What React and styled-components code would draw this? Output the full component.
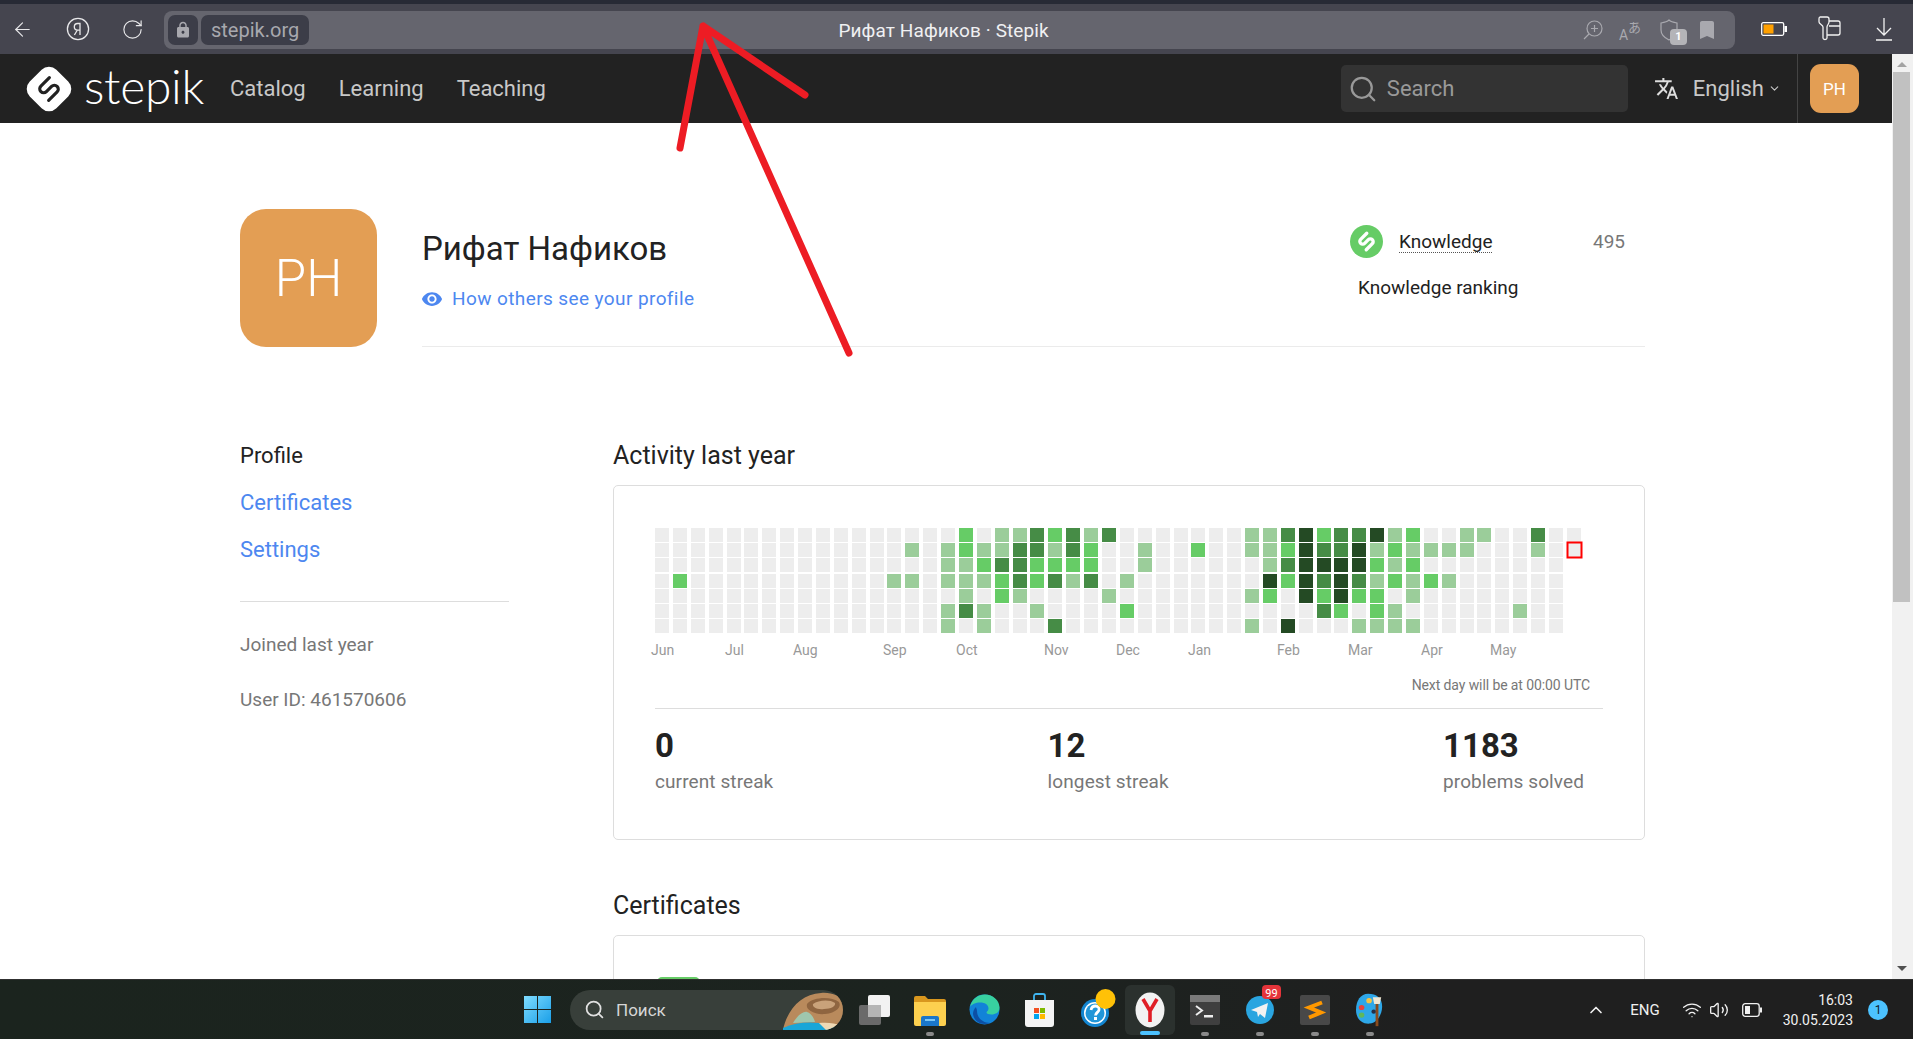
import React from "react"
import styled, { createGlobalStyle } from "styled-components"
import { ArrowLeft, RotateCw, Search, ChevronDown, ChevronUp, Wifi, Volume2 } from "lucide-react"
import { MdTranslate, MdVisibility, MdLock, MdBookmark } from "react-icons/md"

const GlobalStyle = createGlobalStyle`
  html, body {
    margin: 0;
    padding: 0;
    overflow: hidden;
    background: #fff;
    font-family: Roboto, "Liberation Sans", sans-serif;
  }
  * { box-sizing: border-box; }
`

const Screen = styled.div`
  position: relative;
  width: 1913px;
  height: 1039px;
  display: flex;
  flex-direction: column;
  overflow: hidden;
`

/* browser chrome */
const TabStrip = styled.div`
  height: 4px;
  background: #272a35;
  flex: none;
`
const Toolbar = styled.div`
  height: 50px;
  flex: none;
  background: #45454f;
  display: flex;
  align-items: center;
  padding: 0 2px 0 0;
`
const ChromeBtn = styled.div`
  width: 55px;
  height: 50px;
  flex: none;
  display: flex;
  align-items: center;
  justify-content: center;
  color: #e8e8ea;
  &:first-child { margin-left: -5px; }
`
const AddressBar = styled.div`
  flex: 1;
  height: 38px;
  margin: 2px 11px 0 4px;
  background: #65656e;
  border-radius: 8px;
  display: flex;
  align-items: center;
  padding: 0 9px 0 4px;
`
const Chip = styled.div`
  height: 30px;
  background: #3c3d48;
  border-radius: 7px;
  display: flex;
  align-items: center;
  justify-content: center;
  color: #a8a8ae;
  font-size: 20px;
  padding: 0 ${p => p.$pad}px;
  margin-right: 3px;
  flex: none;
`
const PageTitle = styled.div`
  flex: 1;
  text-align: center;
  color: #f0f0f2;
  font-size: 19px;
  letter-spacing: 0.1px;
  padding-left: 1px;
`
const BarIcon = styled.div`
  position: relative;
  width: 38px;
  height: 30px;
  flex: none;
  display: flex;
  align-items: center;
  justify-content: center;
  color: #a9a9af;
`
const ShieldCount = styled.span`
  position: absolute;
  left: 20px;
  top: 14px;
  width: 17px;
  height: 16px;
  border-radius: 4px;
  background: #b4b4b8;
  color: #fff;
  font-size: 11px;
  font-weight: 700;
  text-align: center;
  line-height: 16px;
`

/* page */
const Body = styled.div`
  flex: 1;
  min-height: 0;
  display: flex;
`
const Page = styled.div`
  flex: 1;
  min-width: 0;
  display: flex;
  flex-direction: column;
  overflow: hidden;
  background: #fff;
`
const Scrollbar = styled.div`
  width: 21px;
  flex: none;
  background: #f1f1f1;
  display: flex;
  flex-direction: column;
  align-items: center;
  justify-content: space-between;
  padding: 8px 2px 8px 0;
`
const ScrollArrow = styled.div`
  width: 0;
  height: 0;
  border-left: 5px solid transparent;
  border-right: 5px solid transparent;
  ${p => (p.$up ? "border-bottom: 5px solid #a3a3a3;" : "border-top: 5px solid #505050;")}
`
const ScrollThumb = styled.div`
  width: 17px;
  height: 530px;
  margin: 5px 0 auto;
  background: #c1c1c1;
`

const TopNav = styled.nav`
  height: 69px;
  flex: none;
  background: #222;
  display: flex;
  align-items: center;
  padding: 0 33px 0 26px;
`
const Brand = styled.div`
  display: flex;
  align-items: center;
  gap: 12px;
  margin-right: 26px;
`
const Wordmark = styled.span`
  color: #fff;
  font-family: Lato, sans-serif;
  font-weight: 300;
  font-size: 48px;
  line-height: 44px;
  letter-spacing: -0.3px;
  position: relative;
  top: -3px;
`
const NavLink = styled.a`
  color: #c8c8c8;
  font-size: 22px;
  margin-right: 33px;
`
const SearchBox = styled.div`
  margin-left: auto;
  width: 287px;
  height: 47px;
  background: #333;
  border-radius: 5px;
  display: flex;
  align-items: center;
  padding-left: 7px;
  gap: 9px;
  color: #999;
  font-size: 22px;
`
const Lang = styled.div`
  display: flex;
  align-items: center;
  color: #c8c8c8;
  font-size: 22px;
  margin-left: 26px;
  gap: 14px;
`
const LangCaret = styled(ChevronDown)`
  margin-left: -10px;
`
const NavUser = styled.div`
  align-self: stretch;
  display: flex;
  align-items: center;
  border-left: 1px solid #444;
  margin-left: 16px;
  padding-left: 12px;
`
const NavAvatar = styled.div`
  width: 49px;
  height: 49px;
  border-radius: 11px;
  background: #e39e54;
  color: #fff;
  font-size: 17px;
  display: flex;
  align-items: center;
  justify-content: center;
`

const Container = styled.div`
  width: 1405px;
  margin-left: 240px;
  padding-top: 86px;
`
const ProfileHead = styled.header`
  display: flex;
  gap: 45px;
`
const BigAvatar = styled.div`
  width: 137px;
  height: 138px;
  flex: none;
  border-radius: 26px;
  background: #e39e54;
  color: #fff;
  font-size: 51px;
  font-weight: 300;
  padding-top: 1px;
  display: flex;
  align-items: center;
  justify-content: center;
`
const HeadInfo = styled.div`
  flex: 1;
  border-bottom: 1px solid #ebebeb;
  display: flex;
  justify-content: space-between;
`
const Name = styled.h1`
  margin: 20px 0 0;
  font-size: 33px;
  line-height: 40px;
  font-weight: 400;
  color: #222;
`
const PreviewLink = styled.a`
  display: flex;
  align-items: center;
  gap: 9px;
  margin: 18px 0 0 -1px;
  color: #4d87f0;
  font-size: 19px;
  letter-spacing: 0.4px;
  line-height: 24px;
`
const Rating = styled.div`
  width: 295px;
  padding-top: 16px;
  color: #222;
  font-size: 19px;
`
const RatingRow = styled.div`
  display: flex;
  align-items: center;
  height: 33px;
`
const RatingName = styled.span`
  margin-left: 16px;
  border-bottom: 1px dotted #555;
  line-height: 21px;
`
const RatingValue = styled.span`
  margin-left: auto;
  margin-right: 20px;
  color: #777;
`
const RatingNote = styled.div`
  margin: 18px 0 0 8px;
  line-height: 24px;
`

const Columns = styled.div`
  display: flex;
  gap: 104px;
  padding-top: 93px;
`
const Sidebar = styled.aside`
  width: 269px;
  flex: none;
`
const SideItem = styled.a`
  display: block;
  height: 47px;
  font-size: 22px;
  line-height: 32px;
  color: ${p => (p.$current ? "#222" : "#4d87f0")};
`
const SideRule = styled.hr`
  height: 1px;
  margin: 20px 0 30px;
  border: 0;
  background: #ddd;
`
const SideMeta = styled.div`
  font-size: 19px;
  line-height: 26px;
  color: #777;
  margin-bottom: 29px;
`
const Main = styled.main`
  flex: 1;
  min-width: 0;
`
const SectionTitle = styled.h2`
  margin: 0;
  height: 30px;
  font-size: 25px;
  line-height: 32px;
  font-weight: 400;
  color: #222;
`
const Card = styled.section`
  border: 1px solid #ddd;
  border-radius: 5px;
  margin-top: 15px;
`
const ActivityCard = styled(Card)`
  height: 355px;
  margin-bottom: 50px;
  padding: 42px 41px 0;
`
const Heatmap = styled.svg`
  display: block;
  overflow: visible;
  text {
    font-family: Roboto, sans-serif;
    font-size: 14px;
    fill: #999;
  }
`
const NextDay = styled.div`
  margin-top: 43px;
  padding-right: 13px;
  text-align: right;
  font-size: 14px;
  line-height: 20px;
  letter-spacing: -0.1px;
  color: #777;
`
const Stats = styled.div`
  margin-top: 13px;
  border-top: 1px solid #ddd;
  padding: 18px 19px 0 0;
  display: flex;
  justify-content: space-between;
`
const Stat = styled.div``
const StatValue = styled.div`
  font-size: 33px;
  line-height: 38px;
  font-weight: 700;
  color: #222;
`
const StatLabel = styled.div`
  margin-top: 5px;
  font-size: 19px;
  letter-spacing: 0.1px;
  line-height: 24px;
  color: #777;
`
const CertCard = styled(Card)`
  height: 300px;
  padding: 41px 43px;
`
const CertBadge = styled.div`
  width: 43px;
  height: 20px;
  border-radius: 5px 5px 0 0;
  background: #66cc66;
`

/* windows taskbar */
const Taskbar = styled.footer`
  height: 60px;
  flex: none;
  background: linear-gradient(90deg, #1b241e 0%, #1c231f 50%, #1f1f1f 75%, #1f1f1f 100%);
  border-top: 1px solid #303030;
  display: flex;
  align-items: center;
  padding: 0 25px 0 523px;
`
const SearchPill = styled.div`
  width: 273px;
  height: 40px;
  margin: 0 4px 0 18px;
  background: #383f3a;
  border-radius: 20px;
  display: flex;
  align-items: center;
  padding-left: 14px;
  gap: 11px;
  color: #d6d6d6;
  font-size: 17px;
  overflow: hidden;
  flex: none;
`
const PillArt = styled.svg`
  margin-left: auto;
  flex: none;
`
const AppSlot = styled.div`
  position: relative;
  width: ${p => (p.$active ? 50 : 55)}px;
  height: ${p => (p.$active ? 50 : 52)}px;
  margin: 0 ${p => (p.$active ? 2.5 : 0)}px;
  flex: none;
  display: flex;
  align-items: center;
  justify-content: center;
  border-radius: 6px;
  ${p => p.$active && "background: #2b312e;"}
  svg { overflow: visible; }
`
const RunDot = styled.span`
  position: absolute;
  left: 50%;
  bottom: 0;
  width: ${p => (p.$active ? 20 : 8)}px;
  height: 4px;
  margin-left: ${p => (p.$active ? -10 : -4)}px;
  border-radius: 2px;
  background: ${p => (p.$active ? "#4cc2ff" : "#8a8a8a")};
`
const Tray = styled.div`
  margin-left: auto;
  display: flex;
  align-items: center;
  color: #f0f0f0;
`
const TrayItem = styled.div`
  width: ${p => p.$w}px;
  margin-left: ${p => p.$gap || 0}px;
  display: flex;
  justify-content: center;
  font-size: 15px;
  flex: none;
`
const Clock = styled.div`
  width: 78px;
  font-size: 14px;
  line-height: 20px;
  text-align: right;
  color: #f0f0f0;
`
const NotifyBadge = styled.div`
  width: 20px;
  height: 20px;
  margin-left: 15px;
  border-radius: 50%;
  background: #4cc2ff;
  color: #10202a;
  font-size: 12px;
  line-height: 20px;
  text-align: center;
`
const Annotation = styled.svg`
  position: absolute;
  left: 0;
  top: 0;
  pointer-events: none;
`

const LEVELS = ["#ededed", "#9bcd9a", "#66cc66", "#468c46", "#244a24"]

// level per column, one object for each weekday row
const ACTIVITY = [
  { 17: 2, 19: 1, 20: 1, 21: 3, 22: 2, 23: 3, 24: 1, 25: 3, 33: 1, 34: 1, 35: 3, 36: 4, 37: 2, 38: 3, 39: 3, 40: 4, 41: 1, 42: 2, 45: 1, 46: 1, 49: 3 },
  { 14: 1, 16: 1, 17: 2, 18: 1, 19: 1, 20: 3, 21: 3, 22: 1, 23: 3, 24: 2, 27: 1, 30: 2, 33: 1, 34: 1, 35: 2, 36: 4, 37: 3, 38: 3, 39: 4, 40: 1, 41: 2, 42: 1, 43: 1, 44: 1, 45: 1, 49: 1 },
  { 16: 1, 17: 1, 18: 2, 19: 3, 20: 3, 21: 2, 22: 2, 23: 2, 24: 2, 27: 1, 34: 1, 35: 3, 36: 4, 37: 4, 38: 4, 39: 4, 40: 2, 41: 1, 42: 2 },
  { 1: 2, 13: 1, 14: 1, 16: 1, 17: 1, 18: 1, 19: 2, 20: 3, 21: 2, 22: 3, 23: 1, 24: 3, 26: 1, 34: 4, 35: 2, 36: 4, 37: 3, 38: 4, 39: 3, 40: 1, 41: 2, 42: 1, 43: 2, 44: 1 },
  { 17: 1, 19: 2, 20: 1, 25: 1, 33: 1, 34: 2, 36: 4, 37: 2, 38: 4, 39: 2, 40: 2, 42: 1 },
  { 16: 1, 17: 3, 18: 1, 21: 1, 26: 2, 37: 3, 38: 2, 40: 2, 41: 1, 48: 1 },
  { 16: 1, 18: 1, 22: 3, 33: 1, 35: 4, 39: 1, 40: 1, 41: 1, 42: 1 },
]

const MONTHS = [
  ["Jun", -4], ["Jul", 70], ["Aug", 138], ["Sep", 228], ["Oct", 301], ["Nov", 389],
  ["Dec", 461], ["Jan", 533], ["Feb", 622], ["Mar", 693], ["Apr", 766], ["May", 835],
]

const colX = i => Math.round(i * 17.88)
const rowY = i => Math.round(i * 15.2)

function ActivityChart() {
  return (
    <Heatmap width="948" height="104" viewBox="0 0 948 104">
      {ACTIVITY.map((row, r) =>
        Array.from({ length: r < 2 ? 52 : 51 }, (_, c) => (
          <rect key={`${r}-${c}`} x={colX(c)} y={rowY(r)} width="14" height="14" fill={LEVELS[row[c] || 0]} />
        ))
      )}
      <rect x={colX(51) + 0.5} y={rowY(1) - 0.5} width="14" height="15" fill="none" stroke="#f00" strokeWidth="2" />
      {MONTHS.map(([m, x]) => (
        <text key={m} x={x} y="127">{m}</text>
      ))}
    </Heatmap>
  )
}

// the S of the stepik mark, drawn flat and turned onto the diagonal
const StepikLinks = ({ color, width }) => (
  <path
    d="M30 14.500H18.500a3.750 3.750 0 0 0 0 7.500H25.500a3.750 3.750 0 0 1 0 7.500H14"
    fill="none"
    stroke={color}
    strokeWidth={width}
    strokeLinecap="round"
    transform="rotate(-45 22 22)"
  />
)

const LogoMark = () => (
  <svg width="46" height="46" viewBox="0 0 44 44">
    <rect x="4" y="4" width="36" height="36" rx="10" fill="#fff" transform="rotate(45 22 22)" />
    <StepikLinks color="#222" width="3" />
  </svg>
)

const KnowledgeMark = () => (
  <svg width="33" height="33" viewBox="0 0 44 44">
    <circle cx="22" cy="22" r="22" fill="#66cc66" />
    <StepikLinks color="#fff" width="4.500" />
  </svg>
)

const YaRound = () => (
  <svg width="24" height="24" viewBox="0 0 24 24" fill="none" stroke="#e8e8ea" strokeWidth="1.3">
    <circle cx="12" cy="12" r="10.6" />
    <path d="M14 18V6.5h-2.4a3.3 3.3 0 0 0 0 6.6H14M11.4 13l-3 5" />
  </svg>
)

const ZoomMark = () => (
  <svg width="22" height="22" viewBox="0 0 22 22" fill="none" stroke="currentColor" strokeWidth="1.2">
    <circle cx="12.5" cy="9.5" r="7.5" />
    <path d="M12.5 6v7M9 9.5h7M7 15l-5 5" />
  </svg>
)

const TranslateGlyph = () => (
  <svg width="24" height="24" viewBox="0 0 24 24" fill="currentColor">
    <text x="0" y="22" fontFamily="Roboto, sans-serif" fontSize="14">A</text>
    <text x="9" y="14" fontFamily="'Noto Sans CJK JP', sans-serif" fontSize="13">あ</text>
  </svg>
)

const ShieldMark = () => (
  <svg width="20" height="24" viewBox="0 0 20 24" fill="none" stroke="currentColor" strokeWidth="1.2">
    <path d="M10 2c2 2 5 2.500 8 3v7c0 5-4 8-8 10-4-2-8-5-8-10V5c3-.5 6-1 8-3z" />
  </svg>
)

const BatteryLow = () => (
  <svg width="26" height="14" viewBox="0 0 26 14">
    <rect x=".7" y=".7" width="22" height="12.600" rx="1.500" fill="none" stroke="#fff" strokeWidth="1.300" />
    <rect x="2.500" y="2.500" width="10" height="9" fill="#ffa000" />
    <rect x="23.500" y="4" width="2.500" height="6" fill="#fff" />
  </svg>
)

const PanelsMark = () => (
  <svg width="24" height="26" viewBox="0 0 24 26" fill="none" stroke="#f2f2f2" strokeWidth="1.300">
    <path d="M3 1h7a2 2 0 0 1 2 2v3c0 2-2 3-2 5v11c0 2-4 2-4 0V11c0-2-4-3-4-5V3a2 2 0 0 1 1-2z" />
    <path d="M12 5h9a2 2 0 0 1 2 2v10a2 2 0 0 1-2 2H10M12 10h11" />
  </svg>
)

const DownloadMark = () => (
  <svg width="18" height="24" viewBox="0 0 18 24" fill="none" stroke="#f2f2f2" strokeWidth="1.300">
    <path d="M9 1v17M2 11l7 7 7-7M1 23h16" />
  </svg>
)

const WindowsMark = () => (
  <svg width="29" height="29" viewBox="0 0 29 29">
    <defs>
      <linearGradient id="win" x1="0" y1="0" x2="1" y2="1">
        <stop offset="0" stopColor="#7fdcff" />
        <stop offset="1" stopColor="#1a9fe8" />
      </linearGradient>
    </defs>
    <path fill="url(#win)" d="M1 1h13v13H1zM15 1h13v13H15zM1 15h13v13H1zM15 15h13v13H15z" />
  </svg>
)

const PillPicture = () => (
  <PillArt width="60" height="40" viewBox="0 0 60 40">
    <path d="M0 40C4 20 18 4 38 3c10-1 20 3 22 8v29z" fill="#b98a5c" />
    <path d="M24 14c6-7 24-8 32-2 3 5-3 11-14 12-10 1-20-4-18-10z" fill="#8f6540" />
    <path d="M30 14c5-4 17-5 22-1 1 3-4 6-11 6-7 1-12-2-11-5z" fill="#c9a27a" />
    <path d="M10 33c4-7 10-12 14-11 4 1 7 6 8 10z" fill="#9fc7ae" />
    <path d="M0 38c14-6 30-7 46-3l14 4v2H0z" fill="#19a6d8" />
    <path d="M36 33c8-1 16 0 24 3v5H44z" fill="#eed9b5" />
  </PillArt>
)

const TaskViewIcon = () => (
  <svg width="31" height="30" viewBox="0 0 31 30">
    <rect x="0" y="10" width="22" height="20" rx="2" fill="#6a6a6a" />
    <rect x="9" y="0" width="22" height="22" rx="2" fill="#f2f2f2" />
    <rect x="9" y="10" width="13" height="12" fill="#b5b5b5" />
  </svg>
)

const FolderIcon = () => (
  <svg width="32" height="32" viewBox="0 0 32 32">
    <path d="M0 4a2 2 0 0 1 2-2h9l3 3h16a2 2 0 0 1 2 2v4H0z" fill="#d9971e" />
    <path d="M0 8h32v22a2 2 0 0 1-2 2H2a2 2 0 0 1-2-2z" fill="#fdd04f" />
    <path d="M7 24a2 2 0 0 1 2-2h14a2 2 0 0 1 2 2v8H7z" fill="#1b76c9" />
    <rect x="11" y="25" width="10" height="2" fill="#7cc6f5" />
  </svg>
)

const EdgeIcon = () => (
  <svg width="31" height="31" viewBox="0 0 31 31">
    <circle cx="15.500" cy="15.500" r="15" fill="#1283d8" />
    <path d="M1 13C3 4 10 .5 16 .5c8 0 14.500 6 14.500 13 0 5-4 7-8 7-3 0-5-1-5-2 0-1 2-1.500 2-4 0-4-4-6-8-6-5 0-9 2-10.500 4.500z" fill="#38d0a0" />
    <path d="M8 17c0 7 6 12 13 12-8 3-16-1-17-9 0-3 1-5 3-7 0 1 1 2 1 4z" fill="#0c4fa5" />
  </svg>
)

const StoreIcon = () => (
  <svg width="29" height="34" viewBox="0 0 29 34">
    <path d="M9 8V3a2 2 0 0 1 2-2h7a2 2 0 0 1 2 2v5" fill="none" stroke="#3fb5f0" strokeWidth="1.800" />
    <path d="M0 7h29v24a3 3 0 0 1-3 3H3a3 3 0 0 1-3-3z" fill="#f4f4f4" />
    <path fill="#f25022" d="M9 15h5v5H9z" />
    <path fill="#7fba00" d="M15 15h5v5h-5z" />
    <path fill="#00a4ef" d="M9 21h5v5H9z" />
    <path fill="#ffb900" d="M15 21h5v5h-5z" />
  </svg>
)

const HelpIcon = () => (
  <svg width="30" height="50" viewBox="0 0 30 50">
    <circle cx="15" cy="28" r="14" fill="#1285d0" />
    <circle cx="15" cy="28" r="11" fill="#fff" />
    <circle cx="15" cy="28" r="9.500" fill="#2196d8" />
    <path d="M11 25c.5-3 2.200-4 4.500-4s4 1.800 3.500 4c-.5 2.300-3.500 2.800-3.500 5.500" fill="none" stroke="#fff" strokeWidth="2.800" />
    <rect x="14" y="32" width="3" height="3" fill="#fff" />
    <circle cx="25.500" cy="14" r="10" fill="#ffc107" />
  </svg>
)

const YandexIcon = () => (
  <svg width="30" height="36" viewBox="0 0 30 36">
    <ellipse cx="15" cy="18" rx="14.500" ry="17.500" fill="#f2f2f2" />
    <path d="M8 7l7 12 7-12M15 19v11" fill="none" stroke="#e01e26" strokeWidth="3.600" />
  </svg>
)

const TerminalIcon = () => (
  <svg width="30" height="30" viewBox="0 0 30 30">
    <rect width="30" height="30" rx="2" fill="#3f3f3f" />
    <rect width="30" height="7" fill="#7a7a7a" />
    <path d="M6 11l6 4.500-6 4.500" fill="none" stroke="#eee" strokeWidth="2" />
    <rect x="14" y="20" width="9" height="2.500" fill="#eee" />
  </svg>
)

const TelegramIcon = () => (
  <svg width="28" height="28" viewBox="0 0 28 28">
    <circle cx="14" cy="14" r="14" fill="#2aa5e0" />
    <path d="M5 14l17-7-3 15-5-4-2 3-1-5z" fill="#f2f2f2" />
    <rect x="16" y="-11" width="19" height="14" rx="4" fill="#e5343a" />
    <text x="25.500" y="1" textAnchor="middle" fontFamily="Roboto, sans-serif" fontSize="11" fill="#fff">99</text>
  </svg>
)

const SublimeIcon = () => (
  <svg width="30" height="30" viewBox="0 0 30 30">
    <rect width="30" height="30" rx="2" fill="#484848" />
    <path d="M22 7.500 9 12.500 21 17.500 9 22.500" fill="none" stroke="#ff9800" strokeWidth="4" />
  </svg>
)

const PaletteIcon = () => (
  <svg width="28" height="34" viewBox="0 0 30 40" preserveAspectRatio="none">
    <path d="M13 1c9 0 15 5 15 15 0 9-5 19-13 20C6 37 0 30 0 20 0 9 5 1 13 1z" fill="#2ea7e8" />
    <circle cx="6" cy="17" r="3" fill="#e8433a" />
    <circle cx="14" cy="9" r="3" fill="#f6c343" />
    <circle cx="6" cy="26" r="3" fill="#5fb85c" />
    <circle cx="19" cy="22" r="2.500" fill="#22304a" />
    <rect x="21" y="12" width="3" height="27" fill="#8a4a1c" />
    <path d="M18 5h9l-1.500 8h-6z" fill="#efe6d2" />
  </svg>
)

const TrayBattery = () => (
  <svg width="20" height="14" viewBox="0 0 20 14">
    <rect x=".7" y=".7" width="16.500" height="12.600" rx="2.500" fill="none" stroke="#f0f0f0" strokeWidth="1.300" />
    <rect x="3" y="3" width="5" height="8" fill="#f0f0f0" />
    <rect x="18" y="4.500" width="2" height="5" fill="#f0f0f0" />
  </svg>
)

const TASK_APPS = [
  { id: "tasks", icon: <TaskViewIcon /> },
  { id: "files", icon: <FolderIcon />, running: true },
  { id: "edge", icon: <EdgeIcon /> },
  { id: "store", icon: <StoreIcon /> },
  { id: "help", icon: <HelpIcon /> },
  { id: "yandex", icon: <YandexIcon />, active: true },
  { id: "terminal", icon: <TerminalIcon />, running: true },
  { id: "telegram", icon: <TelegramIcon />, running: true },
  { id: "sublime", icon: <SublimeIcon />, running: true },
  { id: "paint", icon: <PaletteIcon />, running: true },
]

export default function App() {
  return (
    <Screen>
      <GlobalStyle />
      <TabStrip />
      <Toolbar>
        <ChromeBtn><ArrowLeft size={23} strokeWidth={1.2} /></ChromeBtn>
        <ChromeBtn><YaRound /></ChromeBtn>
        <ChromeBtn><RotateCw size={23} strokeWidth={1.2} /></ChromeBtn>
        <AddressBar>
          <Chip $pad={6}><MdLock size={18} /></Chip>
          <Chip $pad={10}>stepik.org</Chip>
          <PageTitle>Рифат Нафиков · Stepik</PageTitle>
          <BarIcon><ZoomMark /></BarIcon>
          <BarIcon><TranslateGlyph /></BarIcon>
          <BarIcon><ShieldMark /><ShieldCount>1</ShieldCount></BarIcon>
          <BarIcon><MdBookmark size={24} /></BarIcon>
        </AddressBar>
        <ChromeBtn><BatteryLow /></ChromeBtn>
        <ChromeBtn><PanelsMark /></ChromeBtn>
        <ChromeBtn><DownloadMark /></ChromeBtn>
      </Toolbar>

      <Body>
        <Page>
          <TopNav>
            <Brand>
              <LogoMark />
              <Wordmark>stepik</Wordmark>
            </Brand>
            <NavLink>Catalog</NavLink>
            <NavLink>Learning</NavLink>
            <NavLink>Teaching</NavLink>
            <SearchBox>
              <Search size={30} strokeWidth={1.8} color="#999" />
              Search
            </SearchBox>
            <Lang>
              <MdTranslate size={25} color="#ddd" />
              <span>English</span>
              <LangCaret size={13} />
            </Lang>
            <NavUser>
              <NavAvatar>PH</NavAvatar>
            </NavUser>
          </TopNav>

          <Container>
            <ProfileHead>
              <BigAvatar>PH</BigAvatar>
              <HeadInfo>
                <div>
                  <Name>Рифат Нафиков</Name>
                  <PreviewLink><MdVisibility size={22} />How others see your profile</PreviewLink>
                </div>
                <Rating>
                  <RatingRow>
                    <KnowledgeMark />
                    <RatingName>Knowledge</RatingName>
                    <RatingValue>495</RatingValue>
                  </RatingRow>
                  <RatingNote>Knowledge ranking</RatingNote>
                </Rating>
              </HeadInfo>
            </ProfileHead>

            <Columns>
              <Sidebar>
                <SideItem $current>Profile</SideItem>
                <SideItem>Certificates</SideItem>
                <SideItem>Settings</SideItem>
                <SideRule />
                <SideMeta>Joined last year</SideMeta>
                <SideMeta>User ID: 461570606</SideMeta>
              </Sidebar>
              <Main>
                <SectionTitle>Activity last year</SectionTitle>
                <ActivityCard>
                  <ActivityChart />
                  <NextDay>Next day will be at 00:00 UTC</NextDay>
                  <Stats>
                    <Stat><StatValue>0</StatValue><StatLabel>current streak</StatLabel></Stat>
                    <Stat><StatValue>12</StatValue><StatLabel>longest streak</StatLabel></Stat>
                    <Stat><StatValue>1183</StatValue><StatLabel>problems solved</StatLabel></Stat>
                  </Stats>
                </ActivityCard>
                <SectionTitle>Certificates</SectionTitle>
                <CertCard><CertBadge /></CertCard>
              </Main>
            </Columns>
          </Container>
        </Page>
        <Scrollbar>
          <ScrollArrow $up />
          <ScrollThumb />
          <ScrollArrow />
        </Scrollbar>
      </Body>

      <Taskbar>
        <WindowsMark />
        <SearchPill>
          <Search size={21} strokeWidth={2} color="#e0e0e0" />
          Поиск
          <PillPicture />
        </SearchPill>
        {TASK_APPS.map(app => (
          <AppSlot key={app.id} $active={app.active}>
            {app.icon}
            {(app.running || app.active) && <RunDot $active={app.active} />}
          </AppSlot>
        ))}
        <Tray>
          <TrayItem $w={22}><ChevronUp size={20} strokeWidth={2} /></TrayItem>
          <TrayItem $w={60} $gap={8}>ENG</TrayItem>
          <TrayItem $w={34}><Wifi size={20} strokeWidth={1.6} /></TrayItem>
          <TrayItem $w={20}><Volume2 size={20} strokeWidth={1.6} /></TrayItem>
          <TrayItem $w={46}><TrayBattery /></TrayItem>
          <Clock>16:03<br />30.05.2023</Clock>
          <NotifyBadge>1</NotifyBadge>
        </Tray>
      </Taskbar>

      <Annotation width="1913" height="1039" viewBox="0 0 1913 1039" fill="none" stroke="#ed1c24" strokeWidth="7" strokeLinecap="round" strokeLinejoin="round">
        <path d="M680 148 703 26 805 95M703 26 849 353" />
      </Annotation>
    </Screen>
  )
}
